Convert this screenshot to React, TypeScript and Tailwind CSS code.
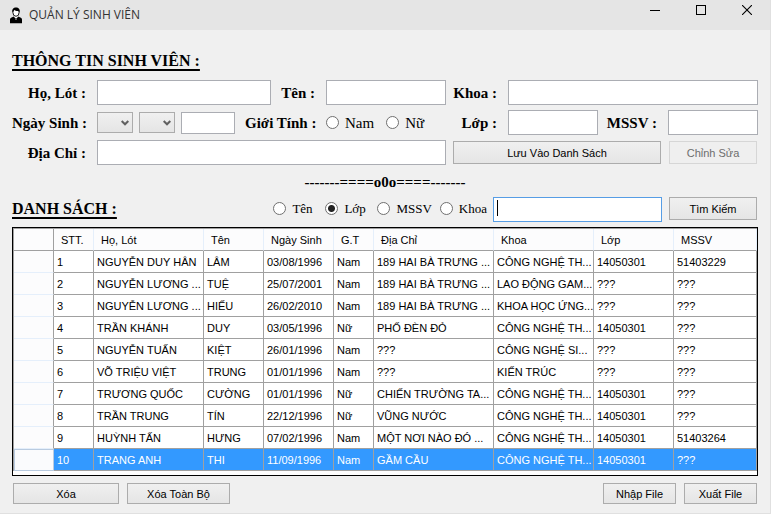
import type { ReactNode } from "react";

const ui = "font-['Liberation_Sans',Arial,sans-serif]";

const columns = [
  { name: "", width: "w-[40px]" },
  { name: "STT.", width: "w-[40px]" },
  { name: "Họ, Lót", width: "w-[110px]" },
  { name: "Tên", width: "w-[60px]" },
  { name: "Ngày Sinh", width: "w-[70px]" },
  { name: "G.T", width: "w-[40px]" },
  { name: "Địa Chỉ", width: "w-[120px]" },
  { name: "Khoa", width: "w-[100px]" },
  { name: "Lớp", width: "w-[80px]" },
  { name: "MSSV", width: "w-[83px]" },
];

const students = [
  ["1", "NGUYỄN DUY HÂN", "LÂM", "03/08/1996", "Nam", "189 HAI BÀ TRƯNG ...", "CÔNG NGHỆ TH...", "14050301", "51403229"],
  ["2", "NGUYỄN LƯƠNG ...", "TUỆ", "25/07/2001", "Nam", "189 HAI BÀ TRƯNG ...", "LAO ĐỘNG GAM...", "???", "???"],
  ["3", "NGUYỄN LƯƠNG ...", "HIẾU", "26/02/2010", "Nam", "189 HAI BÀ TRƯNG ...", "KHOA HỌC ỨNG...", "???", "???"],
  ["4", "TRẦN KHÁNH", "DUY", "03/05/1996", "Nữ", "PHỐ ĐÈN ĐỎ", "CÔNG NGHỆ TH...", "14050301", "???"],
  ["5", "NGUYỄN TUẤN", "KIỆT", "26/01/1996", "Nam", "???", "CÔNG NGHỆ SI...", "???", "???"],
  ["6", "VÕ TRIỆU VIỆT", "TRUNG", "01/01/1996", "Nam", "???", "KIẾN TRÚC", "???", "???"],
  ["7", "TRƯƠNG QUỐC", "CƯỜNG", "01/01/1996", "Nữ", "CHIẾN TRƯỜNG TA...", "CÔNG NGHỆ TH...", "14050301", "???"],
  ["8", "TRẦN TRUNG", "TÍN", "22/12/1996", "Nữ", "VŨNG NƯỚC", "CÔNG NGHỆ TH...", "14050301", "???"],
  ["9", "HUỲNH TẤN", "HƯNG", "07/02/1996", "Nam", "MỘT NƠI NÀO ĐÓ ...", "CÔNG NGHỆ TH...", "14050301", "51403264"],
  ["10", "TRANG ANH", "THI", "11/09/1996", "Nam", "GẦM CẦU", "CÔNG NGHỆ TH...", "14050301", "???"],
];

function Label({ htmlFor, className = "", children }: { htmlFor: string; className?: string; children: ReactNode }) {
  return (
    <label htmlFor={htmlFor} className={`shrink-0 text-right text-[15px] leading-5 font-bold whitespace-nowrap ${className}`}>
      {children}
    </label>
  );
}

function TextBox({ id, className = "" }: { id: string; className?: string }) {
  return (
    <input
      id={id}
      type="text"
      className={`h-[25px] min-w-0 border border-[#abadb3] bg-white px-1 text-sm outline-none ${className}`}
    />
  );
}

function Button({ className = "", disabled = false, children }: { className?: string; disabled?: boolean; children: ReactNode }) {
  return (
    <button
      type="button"
      disabled={disabled}
      className={`border text-[11px] leading-4 whitespace-nowrap ${ui} ${
        disabled
          ? "border-[#d6d6d6] bg-[#efefef] text-[#6d6d6d]"
          : "border-[#acacac] bg-linear-to-b from-[#f0f0f0] to-[#e5e5e5] text-black"
      } ${className}`}
    >
      {children}
    </button>
  );
}

function DropDown({ label }: { label: string }) {
  return (
    <span className="relative h-[21px] w-9 shrink-0">
      <select
        aria-label={label}
        className="h-full w-full appearance-none border border-[#acacac] bg-linear-to-b from-[#f0f0f0] to-[#e5e5e5] outline-none"
      />
      <svg viewBox="0 0 8 6" className="pointer-events-none absolute top-2 right-1 h-[6px] w-2" fill="none" stroke="#606060" strokeWidth="2">
        <path d="M0.7 1 4 4.3 7.3 1" />
      </svg>
    </span>
  );
}

function Radio({ name, label, size, checked = false }: { name: string; label: string; size: string; checked?: boolean }) {
  return (
    <label className={`flex shrink-0 items-center gap-[6px] leading-5 whitespace-nowrap ${size}`}>
      <input
        type="radio"
        name={name}
        defaultChecked={checked}
        className="m-0 h-[13px] w-[13px] shrink-0 appearance-none rounded-full border border-[#707070] bg-white checked:bg-[radial-gradient(circle,#222_0_3px,#fff_4px)]"
      />
      {label}
    </label>
  );
}

function TitleBar() {
  return (
    <header className="flex h-[30px] items-center bg-[#e5e5e5] pl-[9px]">
      <svg viewBox="0 0 14 17" className="h-[17px] w-[14px]">
        <path d="M1 16.2V12.4Q1 10.9 2.6 10.4L5 9.6 7 11.6 9 9.6 11.4 10.4Q13 10.9 13 12.4V16.2Z" fill="#000" />
        <path d="M5.2 8.5H8.8V10L7 11.8 5.2 10Z" fill="#fff" />
        <ellipse cx="7" cy="5.4" rx="3.1" ry="3.9" fill="#fff" stroke="#000" strokeWidth=".9" />
        <path d="M3.3 5.5C2.8 2.2 4.4.5 7 .5S11.2 2.2 10.7 5.5L9.8 3.9C8.5 4.2 6.5 4 5.4 3.1L4.2 4Z" fill="#000" />
        <path d="M6 11.6 7 12.3 8 11.6V13L7 12.4 6 13Z" fill="#888" />
      </svg>
      <h1 className="ml-[6px] font-['Open_Sans',sans-serif] text-xs text-[#333]">QUẢN LÝ SINH VIÊN</h1>
      <div className="ml-auto flex self-start">
        <button type="button" aria-label="Thu nhỏ" className="flex h-5 w-[46px] items-center justify-center">
          <svg viewBox="0 0 10 10" className="h-[10px] w-[10px]" shapeRendering="crispEdges">
            <path d="M0 5.5H10" stroke="#000" />
          </svg>
        </button>
        <button type="button" aria-label="Phóng to" className="flex h-5 w-[46px] items-center justify-center">
          <svg viewBox="0 0 10 10" className="h-[10px] w-[10px]" shapeRendering="crispEdges">
            <path d="M.5.5H9.5V9.5H.5Z" stroke="#000" fill="none" />
          </svg>
        </button>
        <button type="button" aria-label="Đóng" className="flex h-5 w-[46px] items-center justify-center">
          <svg viewBox="0 0 10 10" className="h-[10px] w-[10px]">
            <path d="M0 0 10 10M10 0 0 10" stroke="#000" strokeWidth="1.1" />
          </svg>
        </button>
      </div>
    </header>
  );
}

function StudentForm() {
  return (
    <div className="mt-[9px] flex gap-[7px]">
      <div className="flex min-w-0 flex-[434] flex-col gap-[5px]">
        <div className="flex items-center">
          <Label htmlFor="ho-lot" className="w-[74px]">Họ, Lót :</Label>
          <TextBox id="ho-lot" className="ml-[11px] flex-[164]" />
          <Label htmlFor="ten" className="w-11">Tên :</Label>
          <TextBox id="ten" className="ml-[11px] flex-[110]" />
        </div>
        <div className="flex h-[25px] items-center">
          <Label htmlFor="nam-sinh" className="w-[74px]">Ngày Sinh :</Label>
          <div className="ml-[11px] flex items-center gap-[6px]">
            <DropDown label="Ngày" />
            <DropDown label="Tháng" />
            <input id="nam-sinh" type="text" className="h-[22px] w-[54px] border border-[#abadb3] bg-white px-1 text-sm outline-none" />
          </div>
          <fieldset className="ml-[10px] flex min-w-0 items-center" aria-labelledby="gioi-tinh">
            <span id="gioi-tinh" className="w-[70px] text-right text-[15px] leading-5 font-bold whitespace-nowrap">Giới Tính :</span>
            <div className="ml-[11px] flex gap-3">
              <Radio name="gioi-tinh" label="Nam" size="text-[15px]" />
              <Radio name="gioi-tinh" label="Nữ" size="text-[15px]" />
            </div>
          </fieldset>
        </div>
        <div className="flex items-center">
          <Label htmlFor="dia-chi" className="w-[74px]">Địa Chỉ :</Label>
          <TextBox id="dia-chi" className="ml-[11px] flex-1" />
        </div>
      </div>
      <div className="flex min-w-0 flex-[305] flex-col gap-[5px]">
        <div className="flex items-center">
          <Label htmlFor="khoa" className="w-11">Khoa :</Label>
          <TextBox id="khoa" className="ml-[11px] flex-1" />
        </div>
        <div className="flex items-center">
          <Label htmlFor="lop" className="w-11">Lớp :</Label>
          <TextBox id="lop" className="ml-[11px] flex-1" />
          <Label htmlFor="mssv" className="w-[59px]">MSSV :</Label>
          <TextBox id="mssv" className="ml-[11px] flex-1" />
        </div>
        <div className="flex items-center gap-2 pr-px">
          <Button className="my-px h-[23px] flex-[206]">Lưu Vào Danh Sách</Button>
          <Button className="my-px h-[23px] flex-[86]" disabled>Chỉnh Sửa</Button>
        </div>
      </div>
    </div>
  );
}

function StudentTable() {
  return (
    <div className={`mt-[6px] border border-black bg-white pb-1 ${ui}`}>
      <table className="w-full table-fixed border-separate border-spacing-0 border-t border-l border-[#a0a0a0] text-[11px] leading-4">
        <thead>
          <tr>
            {columns.map((c, i) => (
              <th
                key={c.name}
                scope="col"
                className={`h-[22px] border-r border-b border-b-[#a0a0a0] bg-[#fcfcfd] py-0 pr-0 pl-[7px] text-left font-normal whitespace-nowrap ${c.width} ${
                  i === 0 ? "border-r-[#a0a0a0]" : "border-r-[#e5effb]"
                }`}
              >
                {c.name}
              </th>
            ))}
          </tr>
        </thead>
        <tbody>
          {students.map((row, r) => {
            const selected = r === students.length - 1;
            return (
              <tr key={row[0]} className={selected ? "bg-[#3399ff] text-white" : "text-black"}>
                <th
                  scope="row"
                  aria-label={row[0]}
                  className={`h-[22px] p-0 ${
                    selected
                      ? "border border-[#b9cbe0] bg-[#fafbfd]"
                      : "border-r border-b border-r-[#a0a0a0] border-b-[#e5effb] bg-[#fcfcfd]"
                  }`}
                />
                {row.map((cell, i) => (
                  <td key={i} className="h-[22px] overflow-hidden border-r border-b border-[#a0a0a0] pt-px pr-0 pb-0 pl-[3px] whitespace-nowrap">
                    {cell}
                  </td>
                ))}
              </tr>
            );
          })}
        </tbody>
      </table>
    </div>
  );
}

export default function App() {
  return (
    <div className="border-r border-b border-[#e0e0e0] bg-[#f0f0f0] font-['Liberation_Serif',serif] text-black">
      <TitleBar />
      <main className="pt-[21px] pr-3 pb-[9px] pl-3">
        <h2 className="text-base leading-5 font-bold underline decoration-2 underline-offset-3">THÔNG TIN SINH VIÊN :</h2>
        <StudentForm />
        <p className="mt-[7px] text-center text-[15px] leading-5 font-bold">-------====o0o====-------</p>
        <div className="mt-1 flex items-center">
          <h2 className="text-base leading-5 font-bold whitespace-nowrap underline decoration-2 underline-offset-3">DANH SÁCH :</h2>
          <div className="ml-auto flex gap-2">
            <Radio name="tim-theo" label="Tên" size="min-w-11 text-[13px]" />
            <Radio name="tim-theo" label="Lớp" size="min-w-11 text-[13px]" checked />
            <Radio name="tim-theo" label="MSSV" size="min-w-11 text-[13px]" />
            <Radio name="tim-theo" label="Khoa" size="min-w-11 text-[13px]" />
          </div>
          <div className="relative ml-[6px] h-[25px] w-[169px] shrink-0">
            <input type="text" aria-label="Từ khóa" className="h-full w-full border border-[#569de5] bg-white px-1 text-sm outline-none" />
            <span className="pointer-events-none absolute top-1 left-1 h-4 w-px bg-black" />
          </div>
          <Button className="mr-px ml-[7px] h-[23px] w-[88px] shrink-0">Tìm Kiếm</Button>
        </div>
        <StudentTable />
        <div className="mt-[7px] flex gap-2 px-px">
          <Button className="h-[21px] w-[106px]">Xóa</Button>
          <Button className="h-[21px] w-[103px]">Xóa Toàn Bộ</Button>
          <Button className="ml-auto h-[21px] w-[73px]">Nhập File</Button>
          <Button className="h-[21px] w-[73px]">Xuất File</Button>
        </div>
      </main>
    </div>
  );
}
